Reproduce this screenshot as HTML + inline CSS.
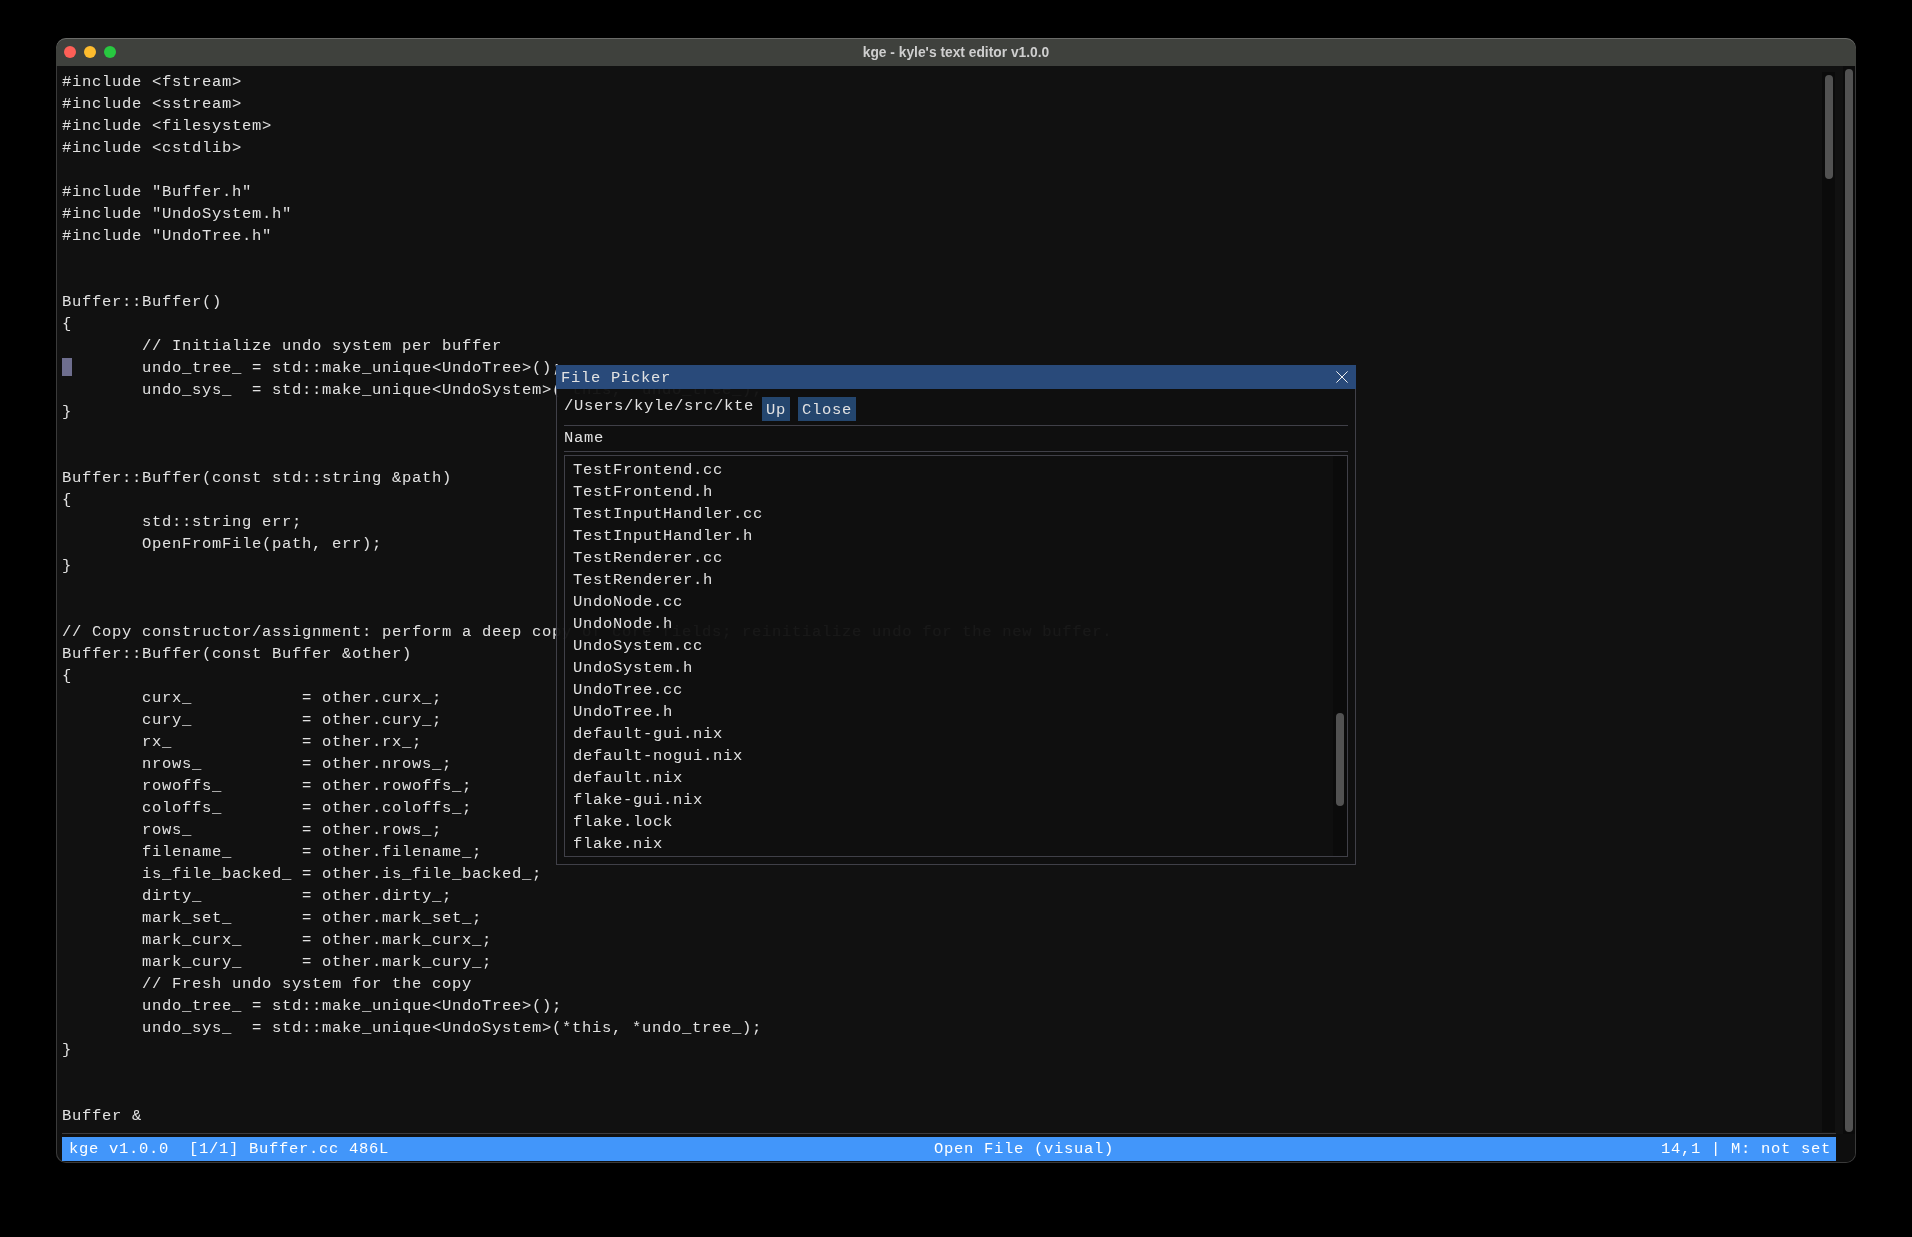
<!DOCTYPE html>
<html>
<head>
<meta charset="utf-8">
<style>
html,body{margin:0;padding:0;}
body{width:1912px;height:1237px;background:#000;position:relative;overflow:hidden;}
.abs{position:absolute;}
.mono{-webkit-font-smoothing:antialiased;will-change:transform;font-family:"Liberation Mono",monospace;font-size:15.5px;letter-spacing:0.7px;line-height:22px;color:#e2e2e2;white-space:pre;margin:0;}
#win{left:56px;top:38px;width:1800px;height:1125px;border-radius:10px;background:#111111;overflow:hidden;box-shadow:inset 0 0 0 1px #3a3a3a;}
#titlebar{left:0;top:0;width:1800px;height:28px;background:#3f413d;border-radius:10px 10px 0 0;box-shadow:inset 0 1px 0 #6a6b68;}
.tl{position:absolute;width:12px;height:12px;border-radius:50%;top:8px;}
#title{-webkit-font-smoothing:antialiased;will-change:transform;left:0;width:1800px;top:1px;height:28px;line-height:28px;text-align:center;font-family:"Liberation Sans",sans-serif;font-weight:bold;font-size:13.8px;color:#cfcfcf;}
#code{left:62px;top:71px;}
.sbtrack{background:#0b0b0b;}
.thumb{background:#525252;border-radius:4px;}
#sep{left:62px;top:1133px;width:1774px;height:1px;background:#3c3c40;}
#status{left:62px;top:1137px;width:1774px;height:24px;background:#4296fa;}
.st{top:1138px;}
#cursor{left:62px;top:358px;width:10px;height:18px;background:#6e6e8e;}
#dlg{left:556px;top:365px;width:800px;height:500px;background:rgba(16,16,16,0.96);box-shadow:inset 0 0 0 1px #404048;}
#dtitle{left:556px;top:365px;width:800px;height:24px;background:#294a7a;}
.hsep{height:1px;background:#404048;}
.btn{background:#24466e;}
#child{left:564px;top:455px;width:784px;height:402px;box-shadow:inset 0 0 0 1px #404048;}
</style>
</head>
<body>
<div id="win" class="abs">
  <div id="titlebar" class="abs"></div>
  <div class="tl" style="left:8.2px;background:#fe5f57;"></div>
  <div class="tl" style="left:28.2px;background:#febc2e;"></div>
  <div class="tl" style="left:48.2px;background:#28c840;"></div>
  <div id="title" class="abs">kge - kyle's text editor v1.0.0</div>
</div>
<pre id="code" class="abs mono">#include &lt;fstream&gt;
#include &lt;sstream&gt;
#include &lt;filesystem&gt;
#include &lt;cstdlib&gt;

#include &quot;Buffer.h&quot;
#include &quot;UndoSystem.h&quot;
#include &quot;UndoTree.h&quot;


Buffer::Buffer()
{
        // Initialize undo system per buffer
        undo_tree_ = std::make_unique&lt;UndoTree&gt;();
        undo_sys_  = std::make_unique&lt;UndoSystem&gt;(*this, *undo_tree_);
}


Buffer::Buffer(const std::string &amp;path)
{
        std::string err;
        OpenFromFile(path, err);
}


// Copy constructor/assignment: perform a deep copy of core fields; reinitialize undo for the new buffer.
Buffer::Buffer(const Buffer &amp;other)
{
        curx_           = other.curx_;
        cury_           = other.cury_;
        rx_             = other.rx_;
        nrows_          = other.nrows_;
        rowoffs_        = other.rowoffs_;
        coloffs_        = other.coloffs_;
        rows_           = other.rows_;
        filename_       = other.filename_;
        is_file_backed_ = other.is_file_backed_;
        dirty_          = other.dirty_;
        mark_set_       = other.mark_set_;
        mark_curx_      = other.mark_curx_;
        mark_cury_      = other.mark_cury_;
        // Fresh undo system for the copy
        undo_tree_ = std::make_unique&lt;UndoTree&gt;();
        undo_sys_  = std::make_unique&lt;UndoSystem&gt;(*this, *undo_tree_);
}


Buffer &amp;</pre>
<div id="cursor" class="abs"></div>
<!-- inner scrollbar -->
<div class="abs sbtrack" style="left:1822px;top:72px;width:13px;height:1060px;"></div>
<div class="abs thumb" style="left:1825px;top:75px;width:8px;height:104px;"></div>
<!-- outer scrollbar -->
<div class="abs sbtrack" style="left:1843px;top:66px;width:12px;height:1068px;"></div>
<div class="abs thumb" style="left:1845px;top:69px;width:8px;height:1063px;"></div>
<div class="abs" style="left:1836px;top:1134px;width:19px;height:28px;background:#0e0e0e;border-radius:0 0 9px 0;"></div>
<div id="sep" class="abs"></div>
<div id="status" class="abs"></div>
<pre class="abs mono st" style="left:69px;color:#fff;">kge v1.0.0  [1/1] Buffer.cc 486L</pre>
<pre class="abs mono st" style="left:934px;color:#fff;">Open File (visual)</pre>
<pre class="abs mono st" style="left:1660.5px;color:#fff;">14,1 | M: not set</pre>

<!-- dialog -->
<div id="dlg" class="abs"></div>
<div id="dtitle" class="abs"></div>
<pre class="abs mono" style="left:561px;top:367px;">File Picker</pre>
<svg class="abs" style="left:1336px;top:371px;" width="12" height="12" viewBox="0 0 12 12"><path d="M0.4 0.4L11.6 11.6M11.6 0.4L0.4 11.6" stroke="#f0f0f0" stroke-width="1" fill="none"/></svg>
<pre class="abs mono" style="left:564px;top:395px;">/Users/kyle/src/kte</pre>
<div class="abs btn" style="left:762px;top:397px;width:28px;height:24px;"></div>
<div class="abs btn" style="left:798px;top:397px;width:58px;height:24px;"></div>
<pre class="abs mono" style="left:766px;top:399px;">Up</pre>
<pre class="abs mono" style="left:802px;top:399px;">Close</pre>
<div class="abs hsep" style="left:564px;top:425px;width:784px;"></div>
<pre class="abs mono" style="left:564px;top:427px;">Name</pre>
<div class="abs hsep" style="left:564px;top:451px;width:784px;"></div>
<div id="child" class="abs"></div>
<pre class="abs mono" style="left:573px;top:459px;">TestFrontend.cc
TestFrontend.h
TestInputHandler.cc
TestInputHandler.h
TestRenderer.cc
TestRenderer.h
UndoNode.cc
UndoNode.h
UndoSystem.cc
UndoSystem.h
UndoTree.cc
UndoTree.h
default-gui.nix
default-nogui.nix
default.nix
flake-gui.nix
flake.lock
flake.nix</pre>
<div class="abs sbtrack" style="left:1333px;top:456px;width:14px;height:400px;"></div>
<div class="abs thumb" style="left:1336px;top:713px;width:8px;height:93px;"></div>
</body>
</html>
